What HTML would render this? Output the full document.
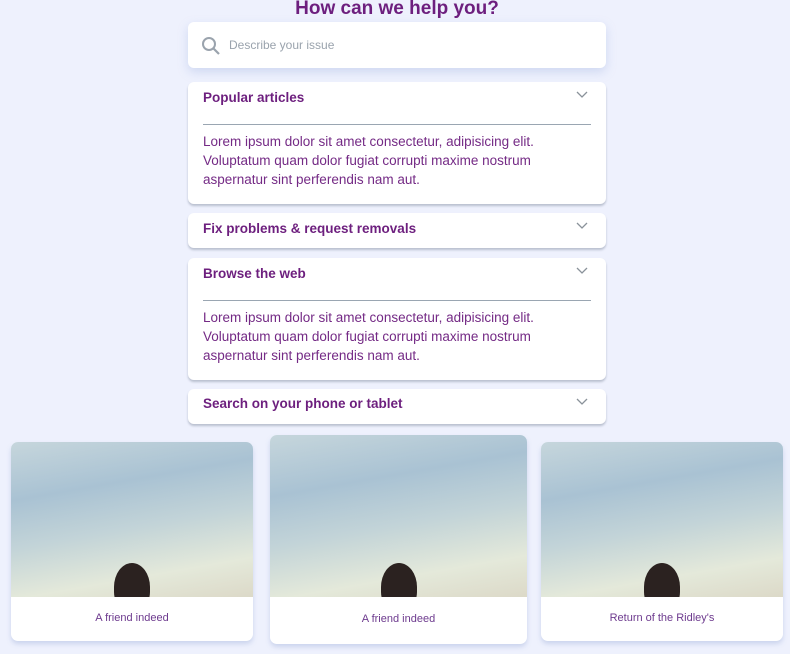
<!DOCTYPE html>
<html><head><style>
*{box-sizing:border-box;margin:0;padding:0}
body{width:790px;height:654px;background:#eef1fd;font-family:"Liberation Sans",sans-serif;position:relative;overflow:hidden;color:#6d1f7e}
h1{position:absolute;top:-2px;left:0;width:794px;text-align:center;font-size:19px;font-weight:bold;color:#6d1f7e}
.box{position:absolute;left:188px;width:418px;background:#fff;border-radius:6px;box-shadow:0 2px 2px rgba(120,130,150,.45)}
.search{top:22px;height:46px;box-shadow:0 4px 10px rgba(150,170,220,.35)}
.search span{position:absolute;left:41px;top:16px;font-size:12px;color:#9aa3ad}
.hd{position:absolute;left:15px;top:8px;font-size:13.5px;font-weight:bold}
.chev{position:absolute;right:18px;top:9px}
.line{position:absolute;left:15px;right:15px;top:42px;border-top:1px solid #9aa6b2}
.txt{position:absolute;left:15px;top:50px;font-size:13.5px;line-height:19px;width:380px;color:#742a85}
.card{position:absolute;background:#fff;border-radius:7px;overflow:hidden;box-shadow:0 3px 5px rgba(140,160,210,.35)}
.img{position:absolute;left:0;top:0;width:100%;height:155px;background:linear-gradient(170deg,#c6d6dc 0%,#a9c2d3 30%,#c3d4d8 55%,#e4e9da 80%,#dcd9c8 100%);overflow:hidden}
.img::after{content:"";position:absolute;left:50%;margin-left:-18px;bottom:-14px;width:36px;height:48px;border-radius:50% 50% 40% 40%;background:#2b2220}
.cap{position:absolute;left:0;width:100%;text-align:center;font-size:11px;color:#6d3a8e}
</style></head><body>
<h1>How can we help you?</h1>
<div class="box search">
<svg style="position:absolute;left:13px;top:14px" width="20" height="20" viewBox="0 0 20 20"><circle cx="8" cy="8" r="6" fill="none" stroke="#9aa3ad" stroke-width="2"/><path d="M12.5 12.5L18 18" stroke="#9aa3ad" stroke-width="2.2"/></svg>
<span>Describe your issue</span></div>
<div class="box" style="top:82px;height:122px"><div class="hd">Popular articles</div><svg class="chev" width="12" height="8"><path d="M1 1l5 5 5-5" fill="none" stroke="#8a929a" stroke-width="1.3"/></svg><div class="line"></div><div class="txt">Lorem ipsum dolor sit amet consectetur, adipisicing elit. Voluptatum quam dolor fugiat corrupti maxime nostrum aspernatur sint perferendis nam aut.</div></div>
<div class="box" style="top:213px;height:35px"><div class="hd" style="top:8px">Fix problems &amp; request removals</div><svg class="chev" width="12" height="8"><path d="M1 1l5 5 5-5" fill="none" stroke="#8a929a" stroke-width="1.3"/></svg></div>
<div class="box" style="top:258px;height:122px"><div class="hd">Browse the web</div><svg class="chev" width="12" height="8"><path d="M1 1l5 5 5-5" fill="none" stroke="#8a929a" stroke-width="1.3"/></svg><div class="line"></div><div class="txt">Lorem ipsum dolor sit amet consectetur, adipisicing elit. Voluptatum quam dolor fugiat corrupti maxime nostrum aspernatur sint perferendis nam aut.</div></div>
<div class="box" style="top:389px;height:35px"><div class="hd" style="top:7px">Search on your phone or tablet</div><svg class="chev" width="12" height="8"><path d="M1 1l5 5 5-5" fill="none" stroke="#8a929a" stroke-width="1.3"/></svg></div>
<div class="card" style="left:11px;top:442px;width:242px;height:199px"><div class="img"></div><div class="cap" style="top:170px">A friend indeed</div></div>
<div class="card" style="left:270px;top:435px;width:257px;height:209px"><div class="img" style="height:162px"></div><div class="cap" style="top:178px">A friend indeed</div></div>
<div class="card" style="left:541px;top:442px;width:242px;height:199px"><div class="img"></div><div class="cap" style="top:170px">Return of the Ridley's</div></div>
</body></html>
